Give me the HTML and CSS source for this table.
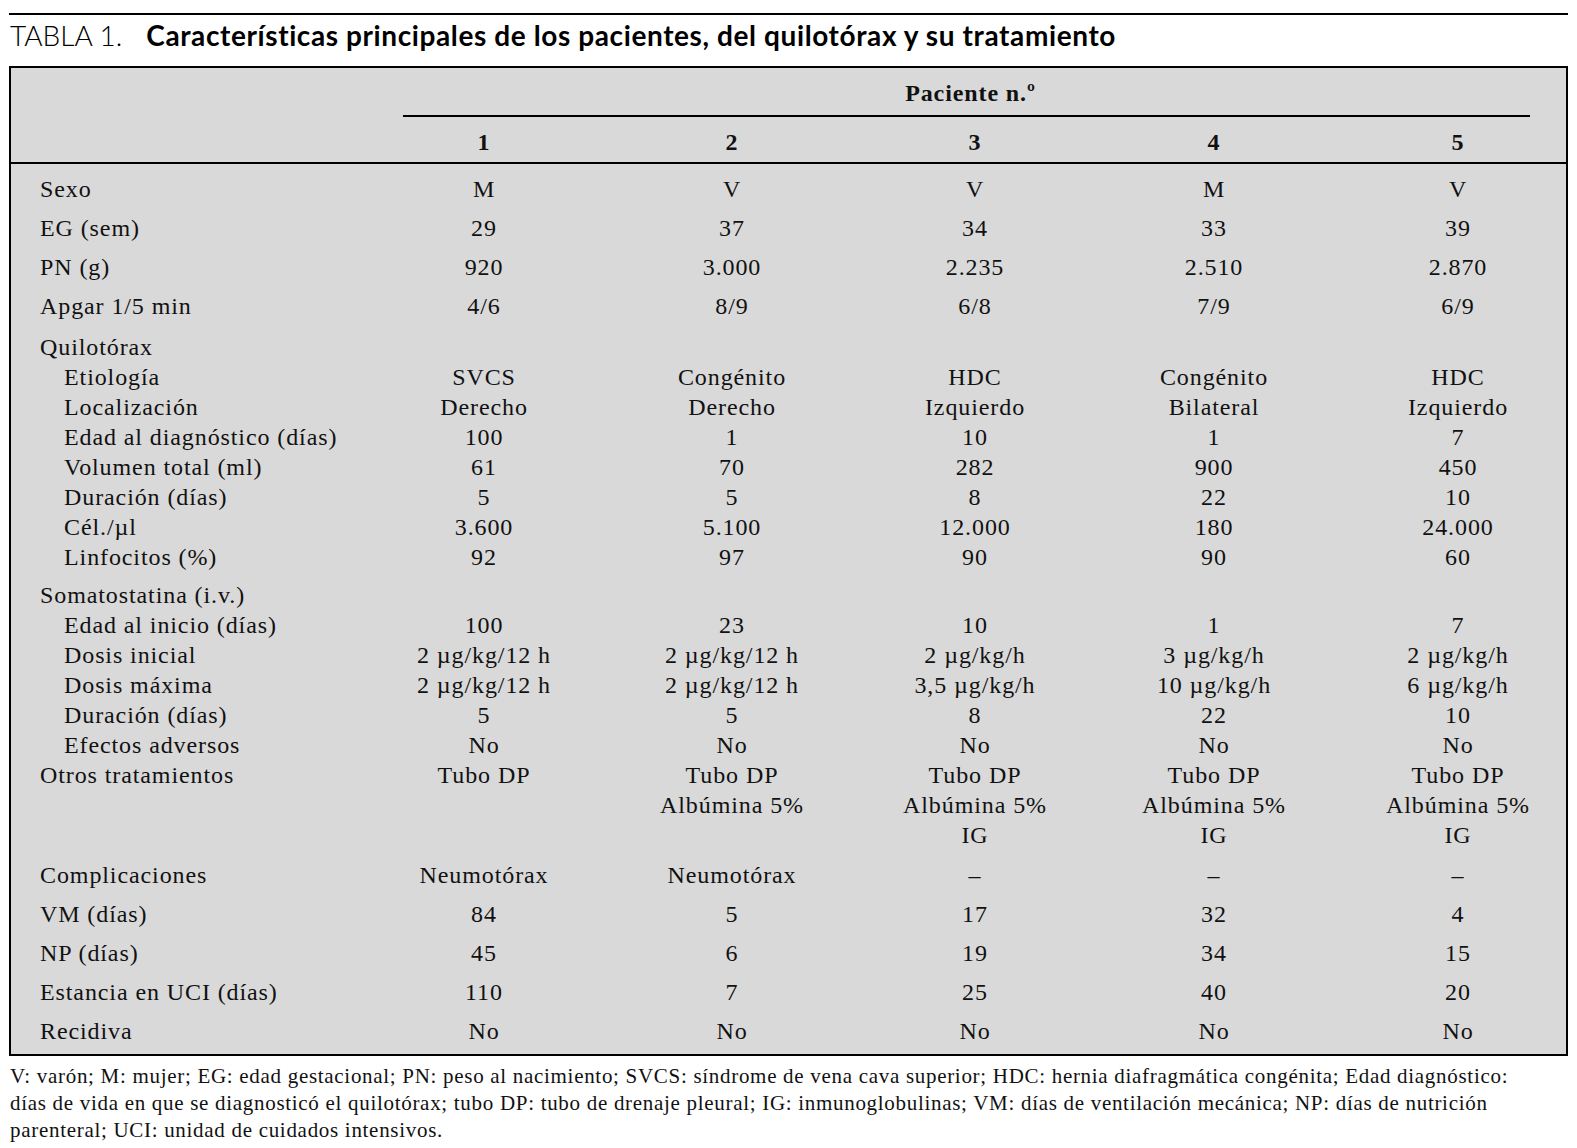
FILE: index.html
```html
<!DOCTYPE html>
<html lang="es">
<head>
<meta charset="utf-8">
<title>Tabla 1</title>
<link rel="stylesheet" href="styles.css">
</head>
<body>
<div class="page">
  <div class="top-rule"></div>
  <h1 class="title"><span class="title-num">TABLA 1.</span><span class="title-text">Características principales de los pacientes, del quilotórax y su tratamiento</span></h1>

  <div class="table">
    <div class="thead">
      <div class="row head-row">
        <div></div>
        <div class="span-cell">
          <div class="span-label">Paciente n.º</div>
          <div class="span-rule"></div>
        </div>
      </div>
      <div class="row nums">
        <div></div><div>1</div><div>2</div><div>3</div><div>4</div><div>5</div>
      </div>
    </div>

    <div class="tbody">
      <div class="row sp"><div class="lab">Sexo</div><div>M</div><div>V</div><div>V</div><div>M</div><div>V</div></div>
      <div class="row sp"><div class="lab">EG (sem)</div><div>29</div><div>37</div><div>34</div><div>33</div><div>39</div></div>
      <div class="row sp"><div class="lab">PN (g)</div><div>920</div><div>3.000</div><div>2.235</div><div>2.510</div><div>2.870</div></div>
      <div class="row sp"><div class="lab">Apgar 1/5 min</div><div>4/6</div><div>8/9</div><div>6/8</div><div>7/9</div><div>6/9</div></div>

      <div class="group g1">
        <div class="row"><div class="lab">Quilotórax</div><div></div><div></div><div></div><div></div><div></div></div>
        <div class="row"><div class="lab ind">Etiología</div><div>SVCS</div><div>Congénito</div><div>HDC</div><div>Congénito</div><div>HDC</div></div>
        <div class="row"><div class="lab ind">Localización</div><div>Derecho</div><div>Derecho</div><div>Izquierdo</div><div>Bilateral</div><div>Izquierdo</div></div>
        <div class="row"><div class="lab ind">Edad al diagnóstico (días)</div><div>100</div><div>1</div><div>10</div><div>1</div><div>7</div></div>
        <div class="row"><div class="lab ind">Volumen total (ml)</div><div>61</div><div>70</div><div>282</div><div>900</div><div>450</div></div>
        <div class="row"><div class="lab ind">Duración (días)</div><div>5</div><div>5</div><div>8</div><div>22</div><div>10</div></div>
        <div class="row"><div class="lab ind">Cél./µl</div><div>3.600</div><div>5.100</div><div>12.000</div><div>180</div><div>24.000</div></div>
        <div class="row"><div class="lab ind">Linfocitos (%)</div><div>92</div><div>97</div><div>90</div><div>90</div><div>60</div></div>
      </div>

      <div class="group g2">
        <div class="row"><div class="lab">Somatostatina (i.v.)</div><div></div><div></div><div></div><div></div><div></div></div>
        <div class="row"><div class="lab ind">Edad al inicio (días)</div><div>100</div><div>23</div><div>10</div><div>1</div><div>7</div></div>
        <div class="row"><div class="lab ind">Dosis inicial</div><div>2 µg/kg/12 h</div><div>2 µg/kg/12 h</div><div>2 µg/kg/h</div><div>3 µg/kg/h</div><div>2 µg/kg/h</div></div>
        <div class="row"><div class="lab ind">Dosis máxima</div><div>2 µg/kg/12 h</div><div>2 µg/kg/12 h</div><div>3,5 µg/kg/h</div><div>10 µg/kg/h</div><div>6 µg/kg/h</div></div>
        <div class="row"><div class="lab ind">Duración (días)</div><div>5</div><div>5</div><div>8</div><div>22</div><div>10</div></div>
        <div class="row"><div class="lab ind">Efectos adversos</div><div>No</div><div>No</div><div>No</div><div>No</div><div>No</div></div>
        <div class="row"><div class="lab">Otros tratamientos</div><div>Tubo DP</div><div>Tubo DP<br>Albúmina 5%</div><div>Tubo DP<br>Albúmina 5%<br>IG</div><div>Tubo DP<br>Albúmina 5%<br>IG</div><div>Tubo DP<br>Albúmina 5%<br>IG</div></div>
      </div>

      <div class="row sp"><div class="lab">Complicaciones</div><div>Neumotórax</div><div>Neumotórax</div><div>–</div><div>–</div><div>–</div></div>
      <div class="row sp"><div class="lab">VM (días)</div><div>84</div><div>5</div><div>17</div><div>32</div><div>4</div></div>
      <div class="row sp"><div class="lab">NP (días)</div><div>45</div><div>6</div><div>19</div><div>34</div><div>15</div></div>
      <div class="row sp"><div class="lab">Estancia en UCI (días)</div><div>110</div><div>7</div><div>25</div><div>40</div><div>20</div></div>
      <div class="row sp"><div class="lab">Recidiva</div><div>No</div><div>No</div><div>No</div><div>No</div><div>No</div></div>
    </div>
  </div>

  <div class="notes">
    <div class="note-line">V: varón; M: mujer; EG: edad gestacional; PN: peso al nacimiento; SVCS: síndrome de vena cava superior; HDC: hernia diafragmática congénita; Edad diagnóstico:</div>
    <div class="note-line">días de vida en que se diagnosticó el quilotórax; tubo DP: tubo de drenaje pleural; IG: inmunoglobulinas; VM: días de ventilación mecánica; NP: días de nutrición</div>
    <div class="note-line">parenteral; UCI: unidad de cuidados intensivos.</div>
  </div>
</div>
</body>
</html>
```

FILE: styles.css
```css
html, body {
  margin: 0;
  padding: 0;
  background: #ffffff;
}

.page {
  padding: 13px 9px 0 9px;
  color: #111111;
  font-family: "Liberation Serif", "Times New Roman", serif;
}

.top-rule {
  height: 2px;
  background: #000000;
}

.title {
  margin: 6px 0 17px 0;
  font-family: Lato, "Open Sans", "Liberation Sans", sans-serif;
  font-size: 28px;
  line-height: 28px;
  font-weight: 400;
  color: #000000;
  white-space: nowrap;
  padding-left: 1px;
}

.title-num {
  font-weight: 300;
  margin-right: 24px;
}

.title-text {
  font-weight: 700;
  letter-spacing: 0.6px;
}

.table {
  border: 2px solid #000000;
  background: #d9d9d9;
  padding-left: 29px;
}

.row {
  display: grid;
  grid-template-columns: 320px 248px 248px 238px 240px 232px;
  font-size: 24px;
  line-height: 30px;
  letter-spacing: 0.9px;
}

.row > div {
  text-align: center;
  white-space: nowrap;
}

.row > div:nth-child(6) {
  padding-left: 16px;
}

.row > .lab {
  text-align: left;
}

.row > .lab.ind {
  padding-left: 24px;
}

.row.sp {
  line-height: 39px;
}

.thead {
  padding: 10px 0 5px 0;
  border-bottom: 2px solid #000000;
  margin-left: -29px;
  padding-left: 29px;
}

.head-row .span-cell {
  grid-column: 2 / 7;
  padding: 0 36px 0 43px;
  text-align: center;
}

.span-label {
  font-weight: 700;
  line-height: 30px;
  padding-left: 8px;
}

.span-rule {
  margin-top: 7px;
  height: 2px;
  background: #000000;
}

.nums {
  margin-top: 10px;
  font-weight: 700;
}

.tbody {
  padding: 6px 0 3px 0;
}

.group.g1 {
  margin-top: 6px;
}

.group.g2 {
  margin-top: 8px;
  margin-bottom: 6px;
}

.notes {
  margin-top: 7px;
  padding-left: 1px;
  font-size: 21px;
  line-height: 27px;
  letter-spacing: 0.7px;
  color: #111111;
}

.note-line {
  white-space: nowrap;
}
```
